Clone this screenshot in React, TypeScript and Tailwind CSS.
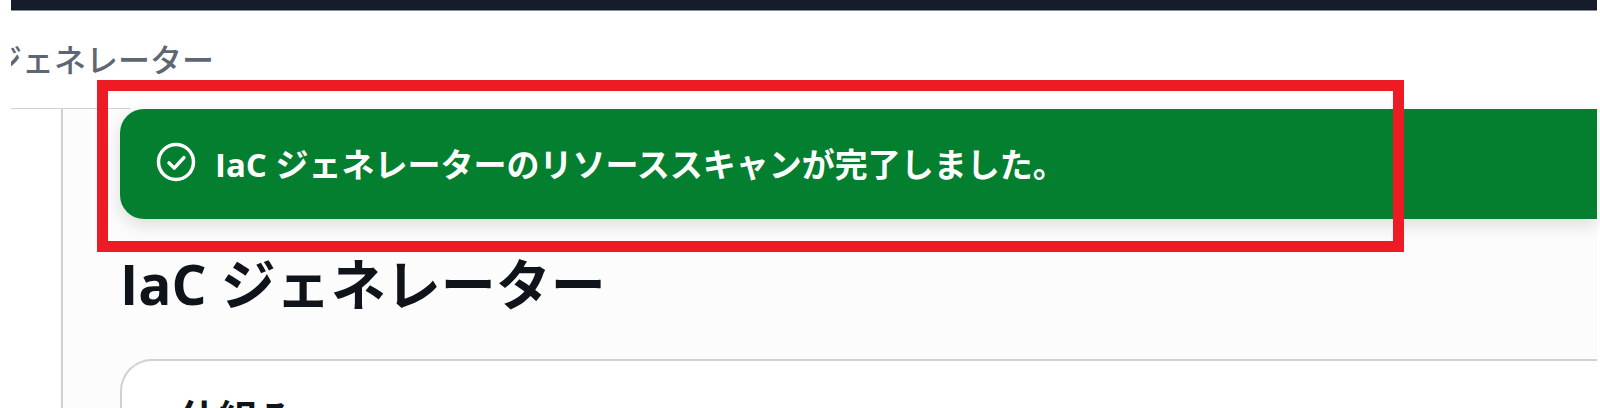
const font = "font-['Open_Sans','Noto_Sans_CJK_JP',sans-serif]";

export default function App() {
  return (
    <div className={`relative h-[408px] w-[1600px] overflow-hidden bg-white pl-[11px] pr-[3px] ${font}`}>
      {/* Top nav, only its lower edge is in the shot */}
      <div className="h-[11px] bg-[#161d2a] border-b border-[#8a8d94]" />

      {/* Breadcrumb, clipped on the left like the reference */}
      <div className="h-[97px] overflow-hidden pt-[29px]">
        <div className="-ml-[21px] text-[32px] leading-[40px] font-medium text-[#5f6673] whitespace-nowrap">
          ジェネレーター
        </div>
      </div>
      <div className="h-px w-[119px] bg-[#d0d1d6]" />

      <div className="flex h-[299px]">
        <div className="w-[52px] shrink-0 bg-white border-r-2 border-[#cfd0d6]" />
        <main className="flex-1 min-w-0 bg-[#fcfcfd] pl-[57px]">
          {/* Flash bar */}
          <div className="flex h-[110px] items-center gap-[18px] rounded-l-[24px] bg-[#037f2f] pl-[35px] text-white shadow-[0_6px_18px_rgba(0,0,0,0.13)]">
            <svg
              className="h-[42px] w-[42px] shrink-0 -translate-y-[2px]"
              viewBox="0 0 24 24"
              fill="none"
              stroke="currentColor"
              strokeWidth={2}
              strokeLinecap="round"
              strokeLinejoin="round"
            >
              <circle cx="12" cy="12" r="10" />
              <path d="M8 12.5l3 3 5.5-6" />
            </svg>
            <span className="text-[33px] font-bold leading-none whitespace-nowrap">
              IaC ジェネレーターのリソーススキャンが完了しました。
            </span>
          </div>

          <h1 className="mt-[30px] text-[55px] leading-[70px] font-bold text-[#0f141a] whitespace-nowrap">
            IaC ジェネレーター
          </h1>

          {/* Card, cut off by the bottom of the shot */}
          <div className="mt-[40px] h-[200px] rounded-tl-[32px] border-l-2 border-t-2 border-[#d0d1d8] bg-white pl-[56px] pt-[33px]">
            <h2 className="text-[40px] leading-[50px] font-bold text-[#0f141a]">仕組み</h2>
          </div>
        </main>
      </div>

      {/* Red annotation box drawn over the screenshot */}
      <div className="absolute left-[97px] top-[80px] h-[172px] w-[1307px] border-[11px] border-[#ed1c24]" />
    </div>
  );
}
